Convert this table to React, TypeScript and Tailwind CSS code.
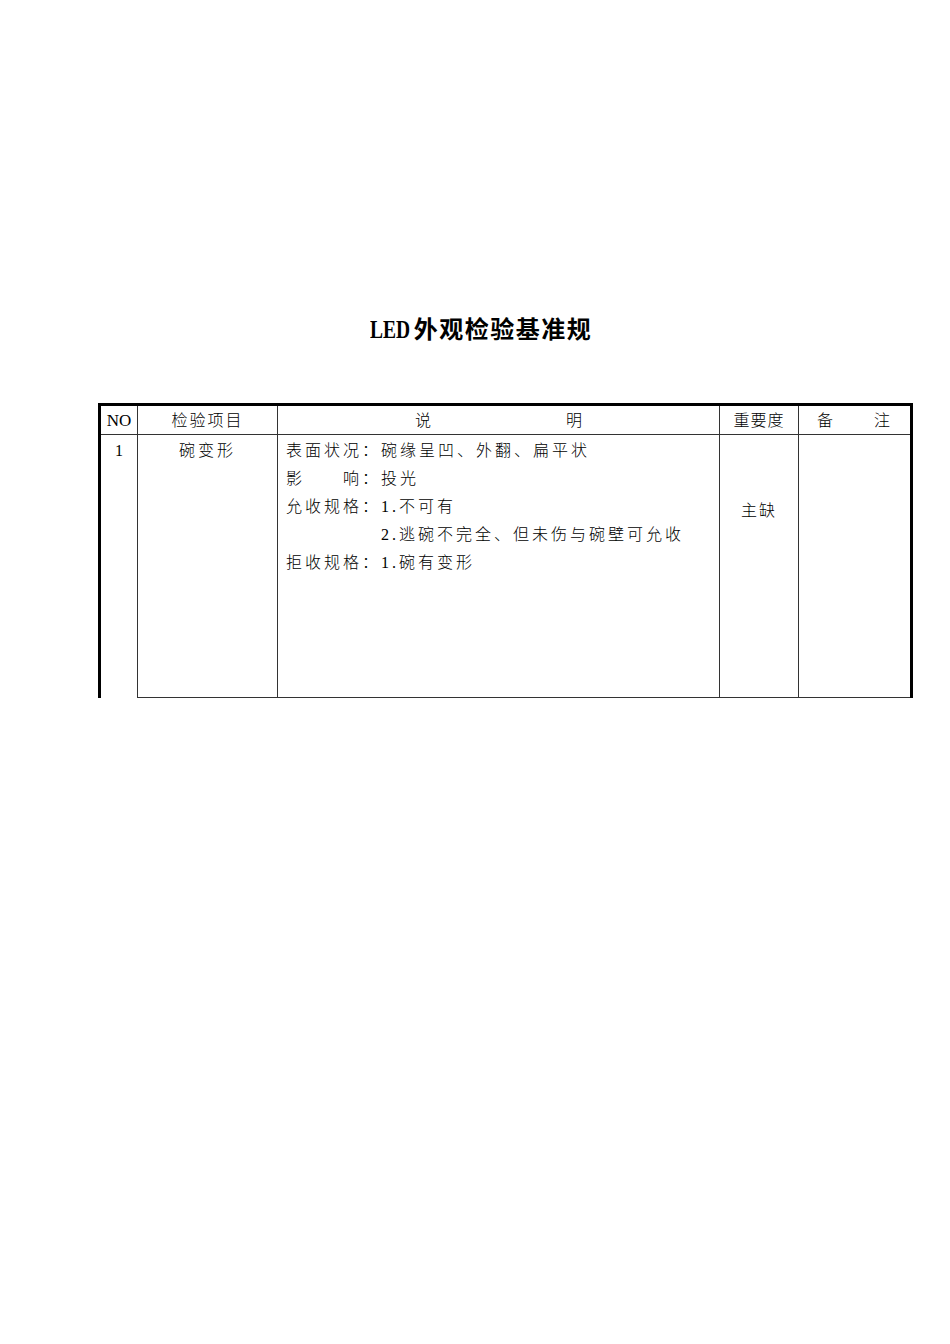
import React from 'react';

const lines = [
  '表面状况：碗缘呈凹、外翻、扁平状',
  '影　　响：投光',
  '允收规格：1.不可有',
];

export default function App() {
  return (
    <div className="min-h-[1344px] w-[950px] bg-white text-black font-['Liberation_Serif','Noto_Sans_CJK_SC',serif]">
      <div className="pt-[314px] pl-[12px] text-center">
        <h1 className="text-[24px] leading-[32px] font-bold tracking-[1.5px] whitespace-nowrap">
          <span className="inline-block w-[44px] origin-left scale-x-[0.75] tracking-normal text-[26px] text-left">LED</span>
          外观检验基准规
        </h1>
      </div>

      {/* inspection table */}
      <div className="ml-[98px] mt-[57px] w-[815px] border-l-[3px] border-t-[3px] border-r-[3px] border-black">
        <div className="grid grid-cols-[37px_140px_442px_79px_111px] text-[16px] font-light">
          {/* header */}
          <div className="h-[29px] flex items-center justify-center pt-[2px] border-b border-r border-[#333] text-[17px] font-normal">NO</div>
          <div className="h-[29px] flex items-center justify-center pt-[2px] border-b border-r border-[#333] tracking-[2px]">检验项目</div>
          <div className="h-[29px] flex items-center justify-between pt-[2px] px-[137px] border-b border-r border-[#333]">
            <span>说</span>
            <span>明</span>
          </div>
          <div className="h-[29px] flex items-center justify-center pt-[2px] border-b border-r border-[#333] tracking-[1px]">重要度</div>
          <div className="h-[29px] flex items-center justify-between pt-[2px] pl-[18px] pr-[20px] border-b border-[#333]">
            <span>备</span>
            <span>注</span>
          </div>

          {/* row 1 */}
          <div className="h-[263px] border-r border-[#333] text-center leading-[28px] pt-[2px] font-normal">1</div>
          <div className="h-[263px] border-r border-b border-[#333] text-center leading-[28px] pt-[2px] tracking-[3px]">碗变形</div>
          <div className="h-[263px] border-r border-b border-[#333] pl-[8px] pt-[2px] leading-[28px] tracking-[3px] whitespace-nowrap">
            {lines.map((l) => (
              <div key={l}>{l}</div>
            ))}
            <div className="pl-[95px]">2.逃碗不完全、但未伤与碗壁可允收</div>
            <div>拒收规格：1.碗有变形</div>
          </div>
          <div className="h-[263px] border-r border-b border-[#333] text-center pt-[62px] leading-[28px] tracking-[2px]">主缺</div>
          <div className="h-[263px] border-b border-[#333]"></div>
        </div>
      </div>
    </div>
  );
}
